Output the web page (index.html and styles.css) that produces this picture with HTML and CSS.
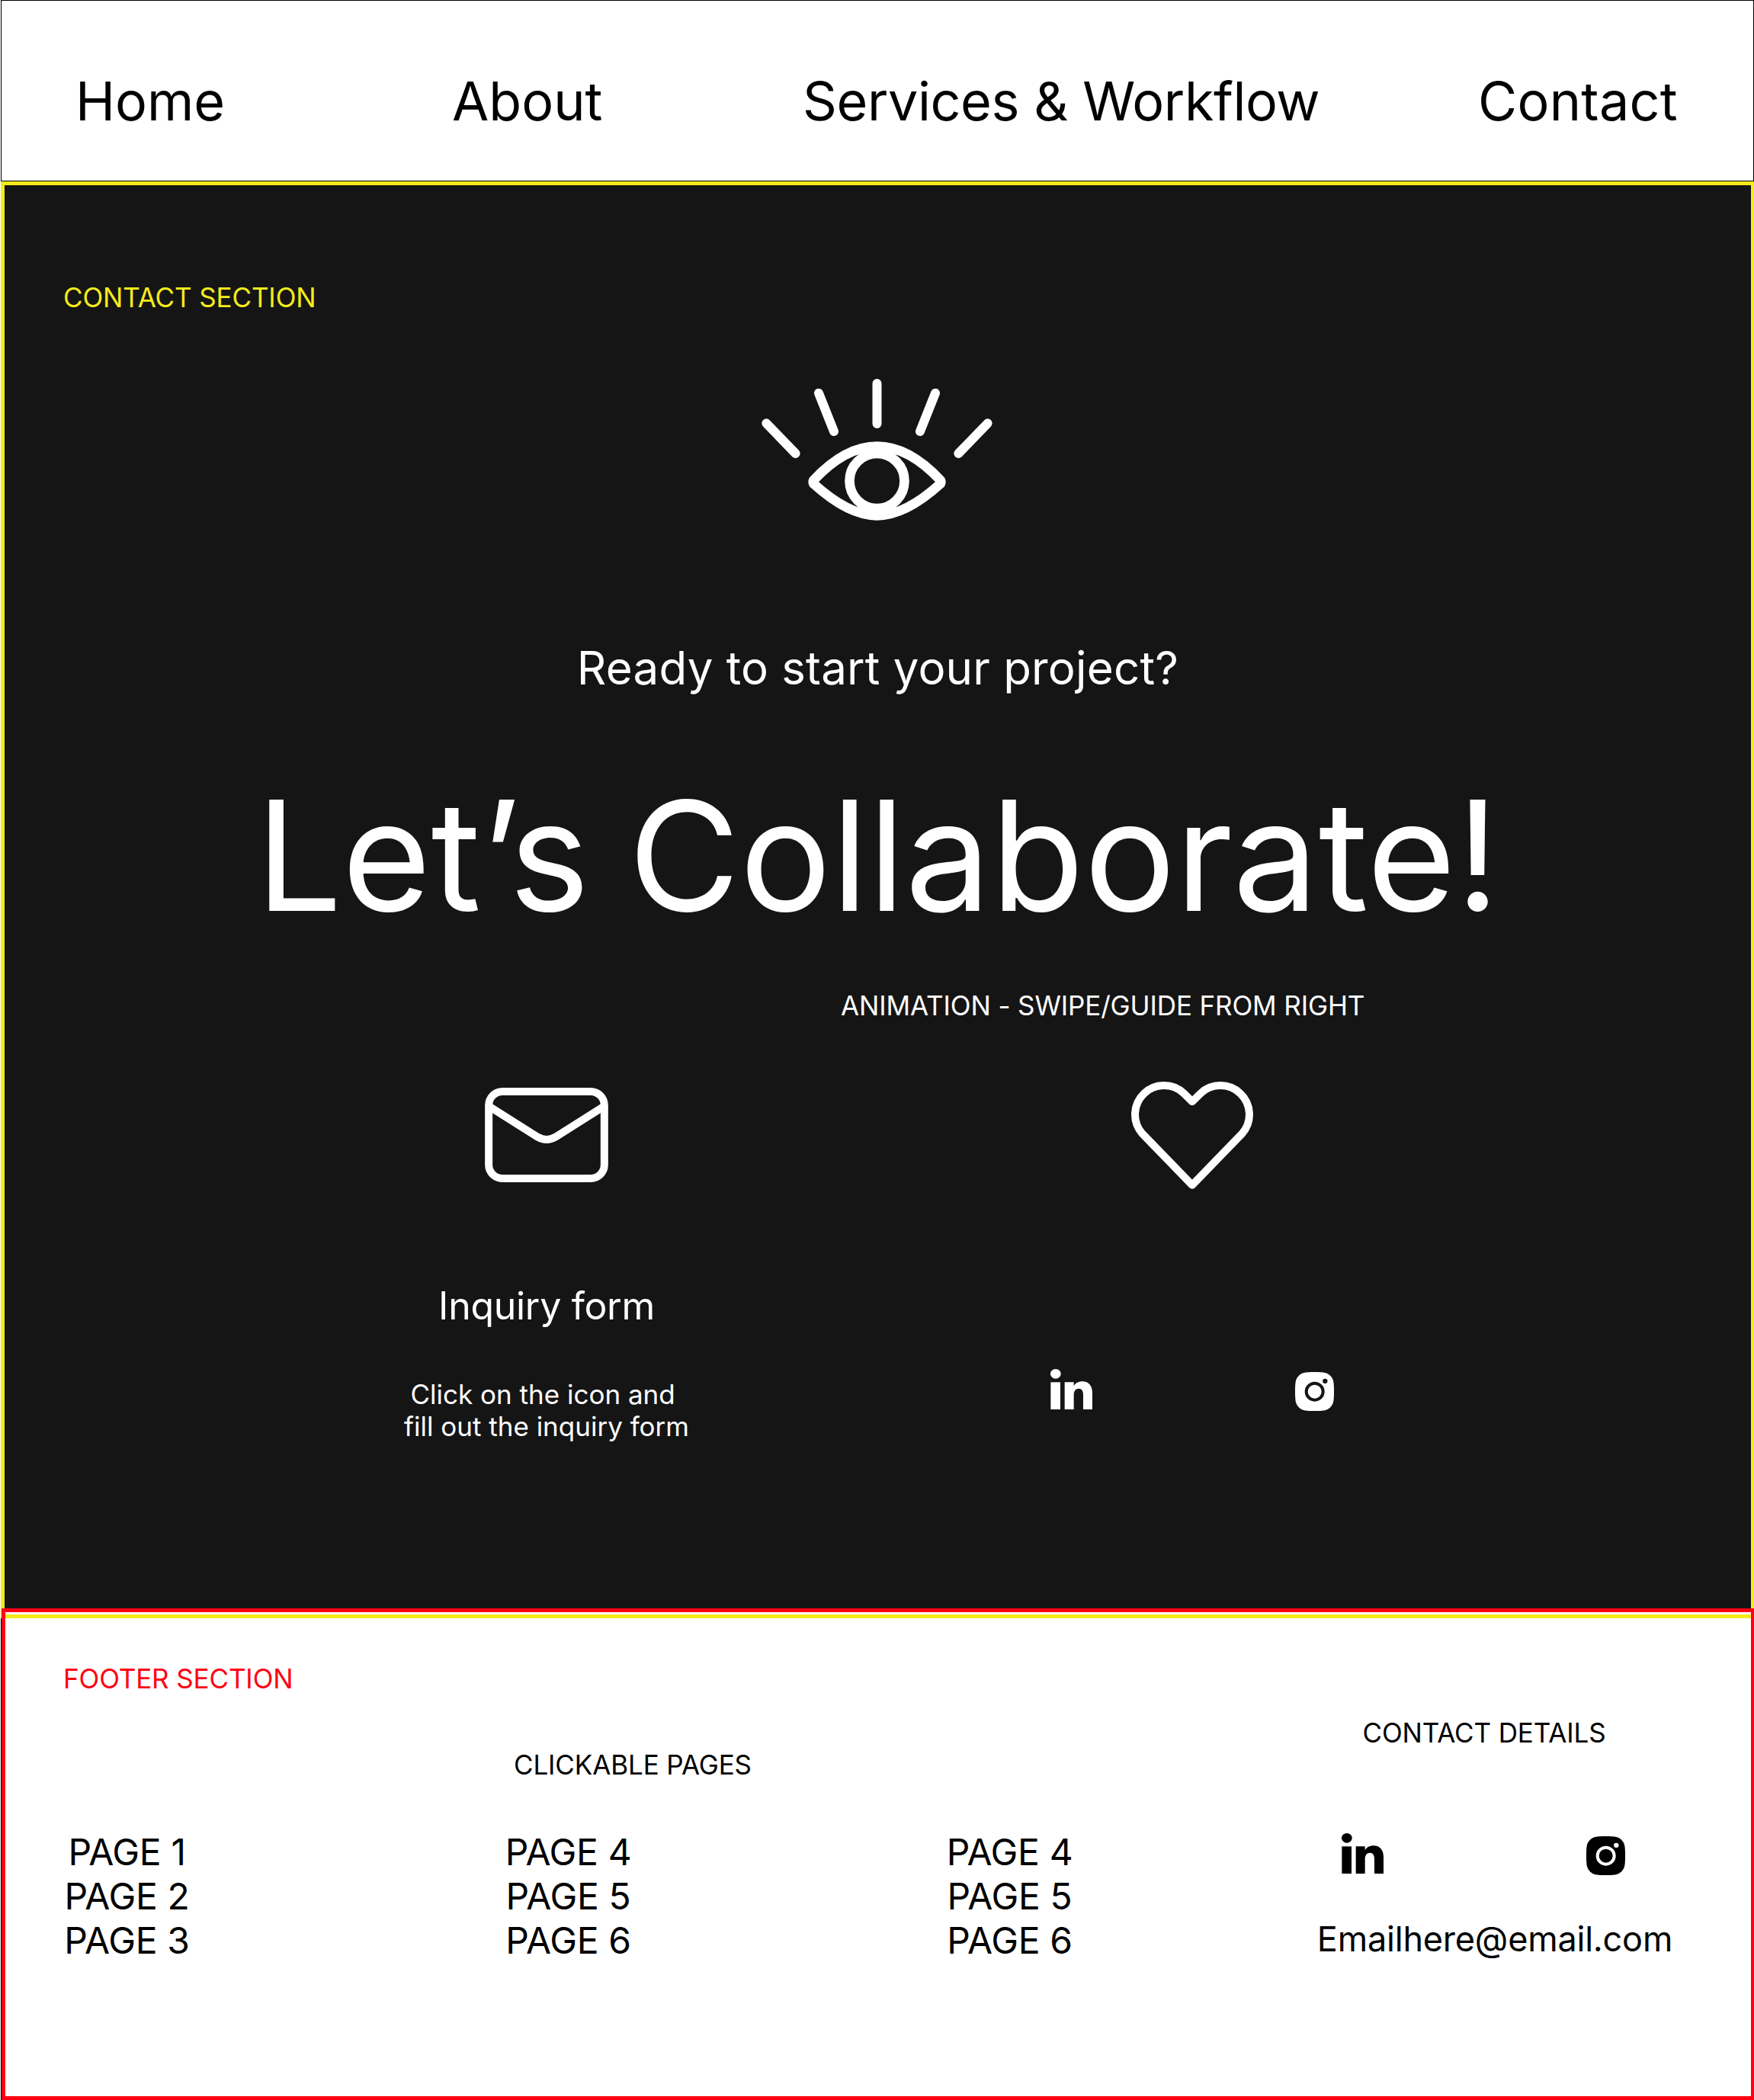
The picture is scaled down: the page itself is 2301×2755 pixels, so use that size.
FILE: index.html
```
<!DOCTYPE html>
<html lang="en">
<head>
    <meta charset="UTF-8">
    <meta name="viewport" content="width=device-width, initial-scale=1.0">
    <title>Contact</title>
    <link rel="stylesheet" href="styles.css">
</head>
<body>
    <!-- shared social icons -->
    <svg class="sprite" aria-hidden="true">
        <symbol id="linkedin" viewBox="54 47 165 159">
            <ellipse cx="74.5" cy="66" rx="20.5" ry="19"/>
            <rect x="55" y="99" width="38" height="107"/>
            <path d="M110 99h36v15c6-11 18-18 34-18 26 0 39 18 39 46v64h-36v-58c0-15-6-24-17-24-13 0-20 10-20 25v57h-36z"/>
        </symbol>
        <symbol id="instagram" viewBox="0 0 153 153">
            <path d="M76.500 0C101 0 113 1 122 4C135 9 144 18 149 31C152 40 153 52 153 76.500C153 101 152 113 149 122C144 135 135 144 122 149C113 152 101 153 76.500 153C52 153 40 152 31 149C18 144 9 135 4 122C1 113 0 101 0 76.500C0 52 1 40 4 31C9 18 18 9 31 4C40 1 52 0 76.500 0Z"/>
            <circle class="hole-ring" cx="77" cy="77" r="33"/>
            <circle class="hole-dot" cx="118" cy="35.500" r="9.500"/>
        </symbol>
    </svg>

    <header class="header">
        <nav class="nav">
            <a href="#" class="nav-home">Home</a>
            <a href="#" class="nav-about">About</a>
            <a href="#" class="nav-services">Services &amp; Workflow</a>
            <a href="#contact" class="nav-contact">Contact</a>
        </nav>
    </header>

    <section class="contact" id="contact">
        <p class="label contact-label">CONTACT SECTION</p>

        <svg class="eye-icon" viewBox="0 0 1020 660">
            <g class="eye-rays">
                <path d="M76 226L191 345M282 107L342 258M511.500 69V228M741 107L681 258M947 226L832 345"/>
            </g>
            <path d="M262 450C335 372 415 317 511.500 317S688 372 761 450Q765 457 761 464C685 533 600 589 511.500 589S338 533 262 464Q258 457 262 450Z"/>
            <circle cx="511.500" cy="453" r="108"/>
        </svg>

        <p class="ready">Ready to start your project?</p>
        <h1 class="title">Let’s Collaborate!</h1>
        <p class="label animation-note">ANIMATION - SWIPE/GUIDE FROM RIGHT</p>

        <div class="options">
            <div class="inquiry">
                <svg class="mail-icon" viewBox="48 81 486 372">
                    <rect x="63.500" y="96" width="455" height="342" rx="54"/>
                    <path d="M64 154L256 275Q291 295 326 275L518 154"/>
                </svg>
                <h2>Inquiry form</h2>
                <p>Click on the icon and&nbsp;<br>fill out the inquiry form</p>
            </div>
            <div class="follow">
                <svg class="heart-icon" viewBox="70 55 480 426">
                    <path d="M310 465L113 262A114 114 0 0 1 278 105L310 137L342 105A114 114 0 0 1 507 262Z"/>
                </svg>
                <div class="social">
                    <svg class="linkedin"><use href="#linkedin"/></svg>
                    <svg class="instagram"><use href="#instagram"/></svg>
                </div>
            </div>
        </div>
    </section>

    <footer class="footer">
        <p class="label footer-label">FOOTER SECTION</p>
        <div class="footer-row">
            <div class="pages">
                <p class="label">CLICKABLE PAGES</p>
                <div class="page-lists">
                    <ul>
                        <li>PAGE 1</li>
                        <li>PAGE 2</li>
                        <li>PAGE 3</li>
                    </ul>
                    <ul>
                        <li>PAGE 4</li>
                        <li>PAGE 5</li>
                        <li>PAGE 6</li>
                    </ul>
                    <ul>
                        <li>PAGE 4</li>
                        <li>PAGE 5</li>
                        <li>PAGE 6</li>
                    </ul>
                </div>
            </div>
            <div class="details">
                <p class="label">CONTACT DETAILS</p>
                <div class="social">
                    <svg class="linkedin"><use href="#linkedin"/></svg>
                    <svg class="instagram"><use href="#instagram"/></svg>
                </div>
                <p class="email">Emailhere@email.com</p>
            </div>
        </div>
    </footer>
</body>
</html>
```
FILE: styles.css
```
* {
    margin: 0;
    padding: 0;
    box-sizing: border-box;
}

body {
    width: 2301px;
    height: 2755px;
    overflow: hidden;
    font-family: Inter, sans-serif;
    font-weight: 400;
    color: #000;
    /* thin page outline on the left */
    background: #fff linear-gradient(#000, #000) 1px 0 / 1px 100% no-repeat;
}

.sprite {
    display: none;
}

.label {
    font-size: 35px;
    line-height: 42px;
    letter-spacing: -0.13px;
    white-space: nowrap;
}

/* Navigation */
.header {
    height: 238px;
    margin-left: 1px;
    border: 1px solid #000;
}

.nav {
    display: flex;
    padding: 89px 0 0 97px;
    font-size: 70px;
    line-height: 85px;
    white-space: nowrap;
}

.nav a {
    color: #000;
    text-decoration: none;
}

.nav-home,
.nav-about,
.nav-services {
    flex: none;
}

.nav-home {
    width: 494px;
}

.nav-about {
    width: 460px;
}

.nav-services {
    width: 886px;
    letter-spacing: -0.4px;
}

.nav-contact {
    letter-spacing: 0.3px;
}

/* Contact */
.contact {
    width: 2301px;
    height: 1885px;
    margin-left: 1px;
    padding-top: 126px;
    border: 5px solid #f5eb1b;
    color: #fff;
    background: linear-gradient(#151515, #151515) 0 0 / 100% 1867px no-repeat #fff;
}

.contact-label {
    padding-left: 77px;
    color: #f5eb1b;
}

.eye-icon {
    display: block;
    width: 340px;
    height: 220px;
    margin: 69px 0 0 974px;
    fill: none;
    stroke: #fff;
    stroke-width: 38;
}

.eye-rays {
    stroke-width: 36;
    stroke-linecap: round;
}

.ready {
    margin-top: 140px;
    font-size: 60px;
    line-height: 73px;
    letter-spacing: 0.2px;
    text-align: center;
}

.title {
    margin-top: 88px;
    font-size: 200px;
    font-weight: 400;
    line-height: 242px;
    word-spacing: -5px;
    text-align: center;
}

.animation-note {
    margin-top: 55px;
    padding-left: 1097px;
}

.options {
    display: flex;
    padding: 78px 0 0 511px;
}

.inquiry,
.follow {
    display: flex;
    flex-direction: column;
    align-items: center;
    width: 400px;
}

.mail-icon {
    width: 162px;
    height: 124px;
    margin-top: 9px;
    fill: none;
    stroke: #fff;
    stroke-width: 30;
}

.inquiry h2 {
    margin-top: 132px;
    font-size: 50px;
    font-weight: 400;
    line-height: 61px;
    letter-spacing: -0.3px;
}

.inquiry p {
    margin-top: 64px;
    font-size: 35px;
    line-height: 42px;
    text-align: center;
}

.follow {
    margin-left: 447px;
}

.heart-icon {
    width: 160px;
    height: 142px;
    fill: none;
    stroke: #fff;
    stroke-width: 30;
    stroke-linejoin: round;
}

/* Social icons */
.social {
    display: flex;
    justify-content: space-between;
    width: 372px;
    fill: #fff;
    stroke: none;
}

.follow .social {
    margin-top: 236px;
}

.linkedin {
    width: 55px;
    height: 53px;
}

.instagram {
    width: 51px;
    height: 51px;
    margin-top: 4px;
    color: #151515;
}

.hole-ring {
    fill: none;
    stroke: currentColor;
    stroke-width: 12;
}

.hole-dot {
    fill: currentColor;
}

/* Footer */
.footer {
    position: relative;
    width: 2300px;
    height: 645px;
    margin: -13px 0 0 2px;
    padding: 66px 0 0 76px;
    border: 5px solid #ff0013;
}

.footer-label {
    color: #ff0013;
}

.footer-row {
    display: flex;
    align-items: flex-start;
}

.pages {
    width: 1643px;
    padding-top: 71px;
}

.pages .label {
    padding-left: 591px;
}

.page-lists {
    display: flex;
    gap: 411px;
    margin-top: 65px;
}

.page-lists ul {
    width: 167px;
    margin-right: 1px;
    list-style: none;
    font-size: 48px;
    line-height: 58px;
    letter-spacing: -0.35px;
    text-align: center;
}

.details {
    display: flex;
    flex-direction: column;
    align-items: center;
    width: 470px;
    padding-top: 29px;
}

.details .label {
    padding-right: 28px;
}

.details .social {
    margin: 111px 30px 0 0;
    fill: #000;
}

.details .instagram {
    color: #fff;
}

.email {
    margin-top: 56px;
    font-size: 45px;
    line-height: 55px;
    letter-spacing: -0.2px;
}
```
